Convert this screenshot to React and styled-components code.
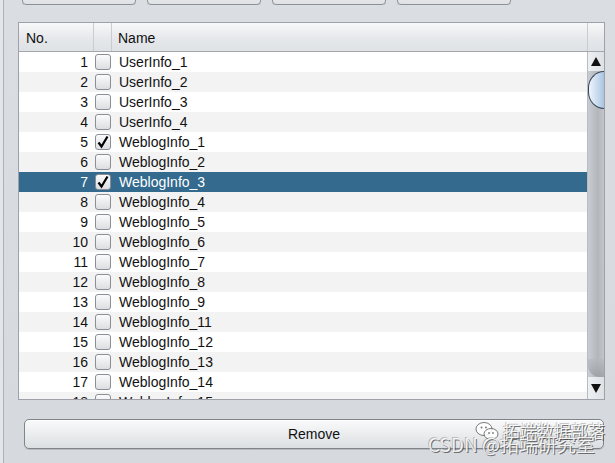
import React from "react";
import styled, { createGlobalStyle } from "styled-components";

const Global = createGlobalStyle`
  html, body { margin: 0; padding: 0; }
  body {
    background: #d9dce1;
    font-family: "Liberation Sans", Arial, sans-serif;
  }
`;

const Page = styled.div`
  position: relative;
  width: 615px;
  height: 463px;
  overflow: hidden;
  background: #e3e5e8;
  display: flex;
`;

const Frame = styled.div`
  margin-left: 3px;
  flex: 1;
  border-left: 1px solid #aeb2b8;
  background: linear-gradient(#dadde2, #d6d9de);
  display: flex;
  flex-direction: column;
`;

const TopStrip = styled.div`
  height: 5px;
  overflow: hidden;
  display: flex;
  align-items: flex-end;
  gap: 11px;
  padding-left: 18px;
`;

const TopButton = styled.div`
  width: 114px;
  height: 20px;
  flex: none;
  box-sizing: border-box;
  border: 1px solid #8d9298;
  border-radius: 4px;
  background: linear-gradient(#f4f5f6, #dfe1e4);
  box-shadow: 0 1px 0 #c3c6ca;
`;

const Table = styled.div`
  margin: 17px 0 0 14px;
  width: 587px;
  height: 378px;
  box-sizing: border-box;
  border: 1px solid #9ea2a8;
  background: #ffffff;
  display: flex;
  flex-direction: column;
  overflow: hidden;
`;

const Header = styled.div`
  display: grid;
  grid-template-columns: 75px 18px 476px 16px;
  height: 28px;
  flex: none;
  border-bottom: 1px solid #a3a7ad;
  background: linear-gradient(#f7f8f9, #e6e8eb 55%, #dfe2e5);
  font-size: 14px;
  color: #111;
`;

const HeadCell = styled.div`
  display: flex;
  align-items: center;
  padding-left: ${(p) => p.$pad || 0}px;
  border-right: ${(p) => (p.$last ? "none" : "1px solid #c9ccd0")};
  padding-top: 2px;
`;

const Body = styled.div`
  flex: 1;
  display: flex;
  min-height: 0;
`;

const Rows = styled.div`
  flex: 1;
  overflow: hidden;
`;

const Row = styled.div`
  display: grid;
  grid-template-columns: 75px 18px 1fr;
  height: 20px;
  align-items: center;
  font-size: 14px;
  background: ${(p) => (p.$sel ? "#336a8e" : p.$alt ? "#f3f3f3" : "#ffffff")};
  color: ${(p) => (p.$sel ? "#ffffff" : "#111111")};
`;

const Num = styled.div`
  text-align: right;
  padding-right: 6px;
`;

const Box = styled.div`
  width: 16px;
  height: 16px;
  box-sizing: border-box;
  margin-left: 1px;
  border: 1px solid #8b8f95;
  border-radius: 3px;
  background: linear-gradient(#fbfbfc, #dcdee1);
  display: flex;
  align-items: center;
  justify-content: center;
`;

const Name = styled.div`
  padding-left: 7px;
`;

const ScrollBar = styled.div`
  width: 16px;
  flex: none;
  display: flex;
  flex-direction: column;
  border-left: 1px solid #b8bcc1;
  background: linear-gradient(90deg, #c9ccd0, #b3b7bc 60%, #c2c5c9);
`;

const Arrow = styled.div`
  height: ${(p) => p.$h}px;
  flex: none;
  background: linear-gradient(90deg, #eef0f2, #dfe2e5);
  display: flex;
  align-items: center;
  justify-content: center;
`;

const Thumb = styled.div`
  height: 38px;
  flex: none;
  box-sizing: border-box;
  border: 1.5px solid #37475a;
  border-right: none;
  border-radius: 18px 0 0 18px / 19px 0 0 19px;
  background: linear-gradient(90deg, #eef4fb, #c6d9ee 60%, #aac4e0);
`;

const Track = styled.div`
  flex: 1;
`;

const TrackEnd = styled.div`
  height: 18px;
  flex: none;
  background: linear-gradient(#b5b9be, #8f9399);
  border-radius: 0 0 0 12px;
  opacity: 0.6;
`;

const RemoveButton = styled.button`
  margin: 19px 0 0 20px;
  width: 580px;
  height: 30px;
  box-sizing: border-box;
  border: 1px solid #7f848a;
  border-radius: 5px;
  background: linear-gradient(#fafafb, #eceef0 45%, #dcdfe2);
  box-shadow: 0 1px 0 #b6babf, inset 0 1px 0 #ffffff;
  font-family: "Liberation Sans", Arial, sans-serif;
  font-size: 14px;
  color: #111;
  padding: 0;
`;

const Watermark = styled.div`
  position: absolute;
  left: 428px;
  top: 418px;
  width: 180px;
  height: 40px;
  pointer-events: none;
  font-family: "Noto Sans CJK SC", "Liberation Sans", sans-serif;
  color: rgba(255, 255, 255, 0.85);
  text-shadow: 1px 1px 0 rgba(60, 60, 60, 0.7), -1px -1px 0 rgba(120, 120, 120, 0.4);
`;

const WmTop = styled.div`
  position: absolute;
  left: 47px;
  top: 0;
  display: flex;
  align-items: center;
  gap: 4px;
  font-size: 17px;
  letter-spacing: 0px;
`;

const WmBottom = styled.div`
  position: absolute;
  left: 0;
  top: 12px;
  font-size: 19px;
  white-space: nowrap;
`;

const names = [
  "UserInfo_1",
  "UserInfo_2",
  "UserInfo_3",
  "UserInfo_4",
  "WeblogInfo_1",
  "WeblogInfo_2",
  "WeblogInfo_3",
  "WeblogInfo_4",
  "WeblogInfo_5",
  "WeblogInfo_6",
  "WeblogInfo_7",
  "WeblogInfo_8",
  "WeblogInfo_9",
  "WeblogInfo_11",
  "WeblogInfo_12",
  "WeblogInfo_13",
  "WeblogInfo_14",
  "WeblogInfo_15",
];
const checked = new Set([5, 7]);

const Check = () => (
  <svg width="14" height="14" viewBox="0 0 14 14">
    <path d="M2.5 7.5 L5.5 11.5 L11.5 1.5" fill="none" stroke="#000" strokeWidth="2.2" strokeLinejoin="miter" />
  </svg>
);

const Tri = ({ up }) => (
  <svg width="10" height="9" viewBox="0 0 10 9">
    <path d={up ? "M5 0 L10 9 L0 9 Z" : "M0 0 L10 0 L5 9 Z"} fill="#111" />
  </svg>
);

const WeChat = () => (
  <svg width="24" height="20" viewBox="0 0 24 20">
    <ellipse cx="9" cy="8" rx="8" ry="6.5" fill="rgba(255,255,255,0.85)" stroke="rgba(70,70,70,0.7)" strokeWidth="1" />
    <ellipse cx="16" cy="13" rx="7" ry="5.5" fill="rgba(255,255,255,0.85)" stroke="rgba(70,70,70,0.7)" strokeWidth="1" />
    <circle cx="6.5" cy="6.5" r="1" fill="rgba(70,70,70,0.7)" />
    <circle cx="11" cy="6.5" r="1" fill="rgba(70,70,70,0.7)" />
    <circle cx="14" cy="12" r="0.9" fill="rgba(70,70,70,0.7)" />
    <circle cx="18" cy="12" r="0.9" fill="rgba(70,70,70,0.7)" />
  </svg>
);

export default function App() {
  return (
    <>
      <Global />
      <Page>
        <Frame>
          <TopStrip>
            <TopButton />
            <TopButton />
            <TopButton />
            <TopButton />
          </TopStrip>
          <Table>
            <Header>
              <HeadCell $pad={7}>No.</HeadCell>
              <HeadCell />
              <HeadCell $pad={6}>Name</HeadCell>
              <HeadCell $last />
            </Header>
            <Body>
              <Rows>
                {names.map((n, i) => {
                  const no = i + 1;
                  return (
                    <Row key={n} $alt={i % 2 === 1} $sel={no === 7}>
                      <Num>{no}</Num>
                      <Box>{checked.has(no) && <Check />}</Box>
                      <Name>{n}</Name>
                    </Row>
                  );
                })}
              </Rows>
              <ScrollBar>
                <Arrow $h={19}>
                  <Tri up />
                </Arrow>
                <Thumb />
                <Track />
                <TrackEnd />
                <Arrow $h={22}>
                  <Tri />
                </Arrow>
              </ScrollBar>
            </Body>
          </Table>
          <RemoveButton>Remove</RemoveButton>
        </Frame>
        <Watermark>
          <WmTop>
            <WeChat />
            <span>拓端数据部落</span>
          </WmTop>
          <WmBottom>CSDN @拓端研究室</WmBottom>
        </Watermark>
      </Page>
    </>
  );
}
